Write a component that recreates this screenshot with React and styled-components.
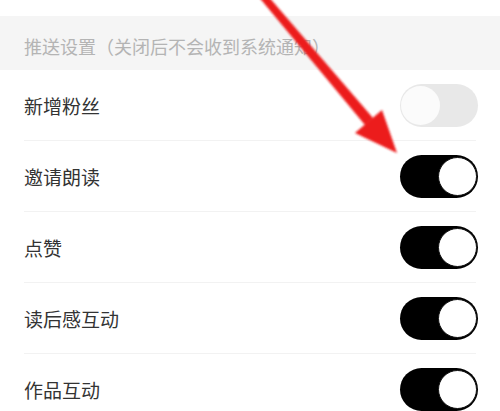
import React from "react";
import styled, { createGlobalStyle } from "styled-components";

const Global = createGlobalStyle`
  html, body { margin: 0; padding: 0; background: #ffffff; }
  body { font-family: "Noto Sans CJK SC", "Noto Sans", sans-serif; }
`;

const Page = styled.div`
  position: relative;
  width: 500px;
  height: 411px;
  overflow: hidden;
  background: #ffffff;
  padding-top: 16px;
  box-sizing: border-box;
`;

const SectionHeader = styled.div`
  height: 54px;
  background: #f5f5f5;
  display: flex;
  align-items: center;
  padding: 6px 24px 0;
  box-sizing: border-box;
  color: #b4b4b4;
  font-size: 18px;
`;

const List = styled.div`
  display: flex;
  flex-direction: column;
`;

const Row = styled.div`
  height: 70px;
  margin: 0 24px;
  display: flex;
  align-items: center;
  justify-content: space-between;
  border-bottom: ${(p) => (p.$last ? "none" : "1px solid #f2f2f2")};
`;

const Label = styled.span`
  font-size: 19px;
  color: #333333;
`;

const Track = styled.div`
  width: 78px;
  height: 43px;
  border-radius: 22px;
  background: ${(p) => (p.$on ? "#000000" : "#e8e8e8")};
  display: flex;
  align-items: center;
  justify-content: ${(p) => (p.$on ? "flex-end" : "flex-start")};
  padding: 0 1px;
  box-sizing: border-box;
  margin-right: -2px;
`;

const Knob = styled.div`
  width: 39px;
  height: 39px;
  border-radius: 50%;
  background: ${(p) => (p.$on ? "#ffffff" : "#fbfbfb")};
  border: ${(p) => (p.$on ? "1.5px solid #111" : "none")};
  box-sizing: border-box;
`;

const ArrowLayer = styled.svg`
  position: absolute;
  left: 0;
  top: 0;
  width: 500px;
  height: 411px;
  pointer-events: none;
`;

const items = [
  { label: "新增粉丝", on: false },
  { label: "邀请朗读", on: true },
  { label: "点赞", on: true },
  { label: "读后感互动", on: true },
  { label: "作品互动", on: true },
];

export default function App() {
  return (
    <>
      <Global />
      <Page>
        <SectionHeader>推送设置（关闭后不会收到系统通知）</SectionHeader>
        <List>
          {items.map((it, i) => (
            <Row key={it.label} $last={i === items.length - 1}>
              <Label>{it.label}</Label>
              <Track $on={it.on}>
                <Knob $on={it.on} />
              </Track>
            </Row>
          ))}
        </List>
        <ArrowLayer viewBox="0 0 500 411">
          <defs>
            <filter id="blur" x="-20%" y="-20%" width="140%" height="140%">
              <feGaussianBlur stdDeviation="0.8" />
            </filter>
          </defs>
          <g filter="url(#blur)" fill="#ec1c1c">
            <polygon points="258,-4 268,-4 373,118 365,125" />
            <polygon points="397,153 355,133 382,110" />
          </g>
        </ArrowLayer>
      </Page>
    </>
  );
}
